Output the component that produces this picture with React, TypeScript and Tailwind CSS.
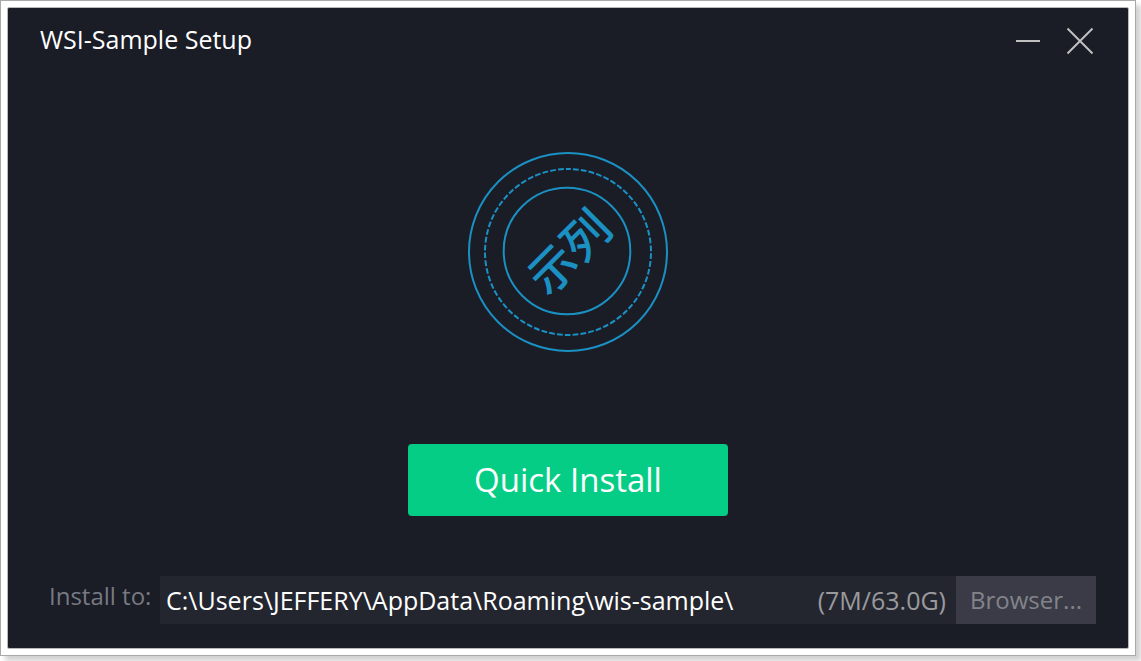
import { useState } from "react";

function Emblem() {
  return (
    <svg
      viewBox="0 0 200 200"
      className="size-[200px] shrink-0"
      role="img"
      aria-label="示列"
      fill="none"
      stroke="#1b90c2"
      strokeWidth="2"
    >
      <circle cx="100" cy="100" r="99" />
      <circle cx="100" cy="100" r="83" strokeDasharray="5.8 2.1" strokeDashoffset="2.9" transform="rotate(-90 100 100)" />
      <circle cx="99" cy="99" r="63.3" />
      <text
        x="99"
        y="98"
        transform="rotate(-45 99 98)"
        textAnchor="middle"
        dominantBaseline="central"
        fill="#1b90c2"
        stroke="none"
        className="font-['Noto_Sans_CJK_SC',sans-serif] text-[47px] font-medium"
      >
        示列
      </text>
    </svg>
  );
}

function TitleBar() {
  return (
    <header className="flex h-[66px] items-center justify-between pr-[34px] pl-8">
      <h1 className="pb-1 text-[25px] leading-8">WSI-Sample Setup</h1>
      <div className="flex items-center gap-6 text-[#c0c0c0]">
        <button type="button" aria-label="Minimize" className="flex size-7 items-center justify-center">
          <svg viewBox="0 0 28 28" className="size-7" stroke="currentColor" strokeWidth="2">
            <path d="M2 14H26" />
          </svg>
        </button>
        <button type="button" aria-label="Close" className="flex size-7 items-center justify-center">
          <svg viewBox="0 0 28 28" className="size-7" stroke="currentColor" strokeWidth="2">
            <path d="M1.5 1.5L26.5 26.5M26.5 1.5L1.5 26.5" />
          </svg>
        </button>
      </div>
    </header>
  );
}

export default function App() {
  const [path, setPath] = useState("C:\\Users\\JEFFERY\\AppData\\Roaming\\wis-sample\\");

  return (
    <div className="h-screen bg-white pr-[5px] pb-[5px] font-['Open_Sans','Noto_Sans',sans-serif]">
      <div className="h-full border border-[#a9a9a9] bg-white p-1.5 shadow-[5px_5px_5px_rgba(0,0,0,0.18)]">
        <main className="flex h-full flex-col rounded-[2px] border border-[#b9b9bd] bg-[#1a1c26] text-white">
          <TitleBar />
          <section className="flex flex-1 flex-col items-center pt-[78px]">
            <Emblem />
            <button
              type="button"
              className="mt-[92px] h-[72px] w-80 rounded bg-[#05cd85] text-[33px] leading-10"
            >
              Quick Install
            </button>
          </section>
          <footer className="flex items-center pr-8 pb-6 pl-10 text-[25px] leading-8">
            <label htmlFor="install-path" className="w-28 shrink-0 pb-2 pl-px text-2xl text-[#777a82]">
              Install to:
            </label>
            <div className="flex h-12 min-w-0 flex-1 items-center bg-[#24262f]">
              <input
                id="install-path"
                type="text"
                value={path}
                onChange={(e) => setPath(e.target.value)}
                className="h-full min-w-0 flex-1 bg-transparent pl-1.5 outline-none"
              />
              <span className="shrink-0 pr-2.5 text-[#9a9a9e]">(7M/63.0G)</span>
            </div>
            <button type="button" className="h-12 w-[140px] shrink-0 bg-[#3a3b46] text-2xl text-[#82848b]">
              Browser...
            </button>
          </footer>
        </main>
      </div>
    </div>
  );
}
